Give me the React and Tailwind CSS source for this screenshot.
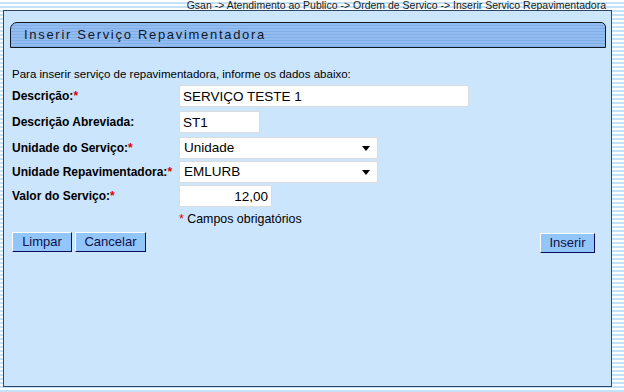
import React from "react";

const font = { fontFamily: '"Liberation Sans", Arial, sans-serif' };

function Label({ children, req }) {
  return (
    <div className="w-[167px] shrink-0 text-[12px] font-bold text-black">
      {children}
      {req && <span className="text-[#e00000]">*</span>}
    </div>
  );
}

function TextBox({ value, w, right }) {
  return (
    <input
      readOnly
      value={value}
      className={`h-[22px] ${w} rounded-[2px] border border-[#dcdcdc] bg-white px-[3px] text-[13.5px] text-black outline-none ${right ? "text-right" : ""}`}
      style={font}
    />
  );
}

function SelectBox({ value, w }) {
  return (
    <div className={`relative h-[22px] ${w}`}>
      <div className="flex h-full w-full items-center rounded-[2px] border border-[#dcdcdc] bg-white pl-[4px] text-[13.5px] text-black">
        {value}
      </div>
      <div className="absolute right-[8px] top-[9px] h-0 w-0 border-l-[4px] border-r-[4px] border-t-[5px] border-l-transparent border-r-transparent border-t-black" />
    </div>
  );
}

function Btn({ children, w }) {
  return (
    <button
      className={`h-[20px] ${w} border border-l-white border-t-white border-r-[#0a0a5a] border-b-[#0a0a5a] bg-[#92c5f9] text-[13px] leading-[18px] text-[#10104a]`}
      style={font}
    >
      {children}
    </button>
  );
}

export default function App() {
  return (
    <div
      className="h-[392px] w-[624px] overflow-hidden bg-[repeating-linear-gradient(to_bottom,#ffffff_0px,#ffffff_2px,#c4e2f6_2px,#c4e2f6_4px)]"
      style={font}
    >
      <div className="h-[10px] pr-[18px] text-right text-[10.5px] leading-[10px] text-[#1a1a1a]">
        Gsan -&gt; Atendimento ao Publico -&gt; Ordem de Servico -&gt; Inserir Servico Repavimentadora
      </div>
      <div className="ml-[3px] h-[377px] w-[609px] border border-[#2d4866] bg-[#cbe5fd]">
        <div className="ml-[6px] mr-[5px] mt-[11px] flex h-[26px] items-center rounded-tl-[7px] rounded-tr-[5px] border border-[#101820] bg-[repeating-linear-gradient(to_bottom,#93bdf1_0px,#93bdf1_2px,#80aee6_2px,#80aee6_3px)] pl-[13px] text-[13px] tracking-[1.7px] text-[#101828]">
          Inserir Serviço Repavimentadora
        </div>
        <div className="px-[8px]">
          <div className="mt-[19px] h-[14px] text-[11.5px] leading-[14px] text-black">
            Para inserir serviço de repavimentadora, informe os dados abaixo:
          </div>
          <div className="mt-[4px] flex h-[22px] items-center">
            <Label req>Descrição:</Label>
            <TextBox value="SERVIÇO TESTE 1" w="w-[290px]" />
          </div>
          <div className="mt-[4px] flex h-[22px] items-center">
            <Label>Descrição Abreviada:</Label>
            <TextBox value="ST1" w="w-[81px]" />
          </div>
          <div className="mt-[4px] flex h-[22px] items-center">
            <Label req>Unidade do Serviço:</Label>
            <SelectBox value="Unidade" w="w-[199px]" />
          </div>
          <div className="mt-[2px] flex h-[22px] items-center">
            <Label req>Unidade Repavimentadora:</Label>
            <SelectBox value="EMLURB" w="w-[199px]" />
          </div>
          <div className="mt-[2px] flex h-[22px] items-center">
            <Label req>Valor do Serviço:</Label>
            <TextBox value="12,00" w="w-[93px]" right />
          </div>
          <div className="mt-[5px] h-[14px] pl-[167px] text-[12.4px] leading-[14px] text-black">
            <span className="text-[#e00000]">*</span> Campos obrigatórios
          </div>
          <div className="mt-[4px] flex items-center">
            <Btn w="w-[60px]">Limpar</Btn>
            <div className="w-[3px]" />
            <Btn w="w-[71px]">Cancelar</Btn>
            <div className="flex-1" />
            <div className="mr-[8px]">
              <Btn w="w-[55px]">Inserir</Btn>
            </div>
          </div>
        </div>
      </div>
    </div>
  );
}
